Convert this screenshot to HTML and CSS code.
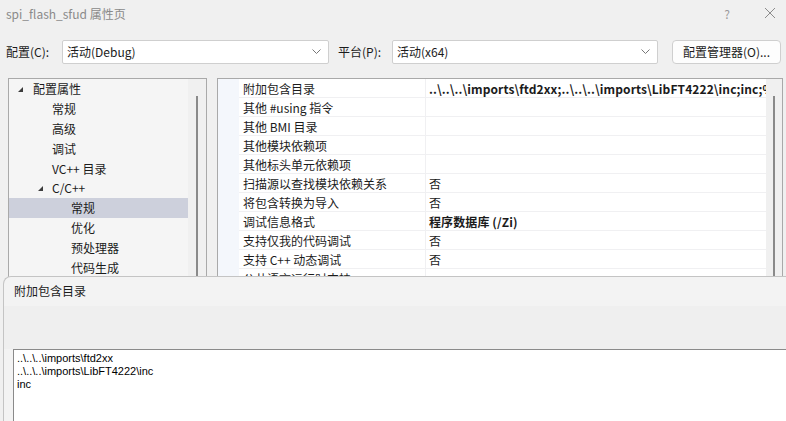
FILE: index.html
```
<!DOCTYPE html>
<html lang="zh-CN">
<head>
    <meta charset="UTF-8">
    <title>spi_flash_sfud 属性页</title>
    <link rel="stylesheet" href="styles.css">
</head>
<body>

<!-- title bar -->
<div class="titlebar">
    <span class="title">spi_flash_sfud 属性页</span>
    <div class="title-btns">
        <span class="help">?</span>
        <svg class="close" width="12" height="12" viewBox="0 0 12 12">
            <path d="M1 1 L11 11 M11 1 L1 11" stroke="#8c8c8c" stroke-width="1" fill="none"/>
        </svg>
    </div>
</div>

<!-- config / platform row -->
<div class="toolbar">
    <span class="lbl lbl-config">配置(C):</span>
    <div class="select select-config">
        <span>活动(Debug)</span>
        <svg width="9" height="5" viewBox="0 0 9 5"><polyline points="0.5,0.5 4.5,4.5 8.5,0.5" stroke="#777" fill="none"/></svg>
    </div>
    <span class="lbl lbl-platform">平台(P):</span>
    <div class="select select-platform">
        <span>活动(x64)</span>
        <svg width="9" height="5" viewBox="0 0 9 5"><polyline points="0.5,0.5 4.5,4.5 8.5,0.5" stroke="#777" fill="none"/></svg>
    </div>
    <button class="btn">配置管理器(O)...</button>
</div>

<div class="panes">
    <!-- tree -->
    <div class="pane pane-tree">
        <div class="tree">
            <div class="node lv0"><i class="caret"></i>配置属性</div>
            <div class="node lv1">常规</div>
            <div class="node lv1">高级</div>
            <div class="node lv1">调试</div>
            <div class="node lv1">VC++ 目录</div>
            <div class="node lv1x"><i class="caret"></i>C/C++</div>
            <div class="node lv2 selected">常规</div>
            <div class="node lv2">优化</div>
            <div class="node lv2">预处理器</div>
            <div class="node lv2">代码生成</div>
        </div>
        <div class="vscroll"><div class="thumb"></div></div>
    </div>

    <!-- property grid -->
    <div class="pane pane-grid">
        <div class="gutter"></div>
        <div class="grid">
            <div class="row"><div class="name">附加包含目录</div><div class="val bold">..\..\..\imports\ftd2xx;..\..\..\imports\LibFT4222\inc;inc;%(AdditionalIncludeDirectories)</div></div>
            <div class="row"><div class="name">其他 #using 指令</div><div class="val"></div></div>
            <div class="row"><div class="name">其他 BMI 目录</div><div class="val"></div></div>
            <div class="row"><div class="name">其他模块依赖项</div><div class="val"></div></div>
            <div class="row"><div class="name">其他标头单元依赖项</div><div class="val"></div></div>
            <div class="row"><div class="name">扫描源以查找模块依赖关系</div><div class="val">否</div></div>
            <div class="row"><div class="name">将包含转换为导入</div><div class="val">否</div></div>
            <div class="row"><div class="name">调试信息格式</div><div class="val bold">程序数据库 (/Zi)</div></div>
            <div class="row"><div class="name">支持仅我的代码调试</div><div class="val">否</div></div>
            <div class="row"><div class="name">支持 C++ 动态调试</div><div class="val">否</div></div>
            <div class="row"><div class="name">公共语言运行时支持</div><div class="val"></div></div>
        </div>
        <div class="vscroll vscroll-grid"><div class="thumb"></div></div>
    </div>
</div>

<!-- edit popup over the dialog -->
<div class="popup">
    <div class="popup-title">附加包含目录</div>
    <div class="popup-band"></div>
    <div class="popup-edit">
        <div>..\..\..\imports\ftd2xx</div>
        <div>..\..\..\imports\LibFT4222\inc</div>
        <div>inc</div>
    </div>
</div>

</body>
</html>
```

FILE: styles.css
```
body {
    margin: 0;
    width: 786px;
    height: 421px;
    overflow: hidden;
    position: relative;
    background-color: #f0f0f0;
    font-family: "Noto Sans CJK SC", "Noto Sans", sans-serif;
    font-size: 12px;
    color: #1b1b1b;
}

/* Title bar */
.titlebar {
    height: 26px;
    display: flex;
    align-items: center;
    justify-content: space-between;
    padding-left: 6px;
}

.title {
    color: #8a8a8a;
}

.title-btns {
    display: flex;
    align-items: center;
    gap: 34px;
    padding-right: 10px;
}

.help {
    color: #9a9a9a;
    font-size: 12px;
}

/* Toolbar */
.toolbar {
    display: flex;
    align-items: center;
    height: 25px;
    margin-top: 13px;
    padding-left: 6px;
}

.lbl-config {
    width: 56px;
}

.lbl-platform {
    width: 54px;
    margin-left: 9px;
}

.select {
    height: 24px;
    box-sizing: border-box;
    background-color: #fff;
    border: 1px solid #cfcfcf;
    border-radius: 2px;
    display: flex;
    align-items: center;
    justify-content: space-between;
    padding: 0 7px 0 4px;
}

.select-config {
    width: 267px;
}

.select-platform {
    width: 266px;
}

.btn {
    margin-left: 14px;
    width: 109px;
    height: 24px;
    font-family: inherit;
    font-size: 12px;
    color: #1b1b1b;
    background-color: #fdfdfd;
    border: 1px solid #cfcfcf;
    border-radius: 4px;
    padding: 0;
}

/* Panes */
.panes {
    display: flex;
    gap: 10px;
    margin-top: 14px;
    padding-left: 8px;
}

.pane {
    box-sizing: border-box;
    height: 230px;
    border: 1px solid #a9a9a9;
    display: flex;
}

.pane-tree {
    width: 199px;
}

.pane-grid {
    width: 566px;
}

.tree {
    width: 179px;
    background-color: #f5f5f5;
}

.vscroll {
    flex: 1;
    background-color: #f0f0f0;
}

.vscroll .thumb {
    margin: 17px 0 0 8px;
    width: 2px;
    height: 300px;
    background-color: #8a8a8a;
}

.vscroll-grid .thumb {
    margin-left: 7px;
}

.node {
    height: 19.8px;
    line-height: 19px;
    display: flex;
    align-items: center;
    white-space: nowrap;
}

.lv0 { padding-left: 9px; }
.lv1 { padding-left: 43px; }
.lv1x { padding-left: 29px; }
.lv2 { padding-left: 62px; }

.caret {
    width: 0;
    height: 0;
    border-left: 5px solid transparent;
    border-bottom: 5px solid #3c3c3c;
    margin-right: 10px;
    margin-top: 1px;
}

.lv1x .caret {
    margin-right: 9px;
}

.selected {
    background-color: #cdd0dc;
}

/* Property grid */
.gutter {
    width: 21px;
    background-color: #f4f7fc;
}

.grid {
    width: 527px;
    background-color: #fff;
}

.row {
    display: flex;
    height: 19px;
    box-sizing: border-box;
    border-bottom: 1px solid #f0f0f2;
}

.name {
    width: 186px;
    padding-left: 4px;
    box-sizing: border-box;
    line-height: 20px;
    white-space: nowrap;
}

.val {
    flex: 1;
    border-left: 1px solid #f0f0f2;
    padding-left: 3px;
    line-height: 20px;
    white-space: nowrap;
    overflow: hidden;
}

.bold {
    font-weight: bold;
    letter-spacing: 0.1px;
}

/* Popup editor window */
.popup {
    position: absolute;
    left: 3px;
    top: 276px;
    right: -20px;
    bottom: -20px;
    background-color: #f3f3f3;
    border-top: 1px solid #c4c4c4;
    border-left: 1px solid #c4c4c4;
    border-top-left-radius: 8px;
    display: flex;
    flex-direction: column;
}

.popup-title {
    height: 29px;
    line-height: 27px;
    padding-left: 10px;
}

.popup-band {
    height: 43px;
    background-color: #efefef;
}

.popup-edit {
    flex: 1;
    margin-left: 9px;
    background-color: #fff;
    border-top: 1px solid #8a8a8a;
    border-left: 1px solid #8a8a8a;
    padding: 2px 3px;
    font-family: "Liberation Sans", Arial, sans-serif;
    font-size: 11px;
    line-height: 13px;
    color: #000;
}
```
